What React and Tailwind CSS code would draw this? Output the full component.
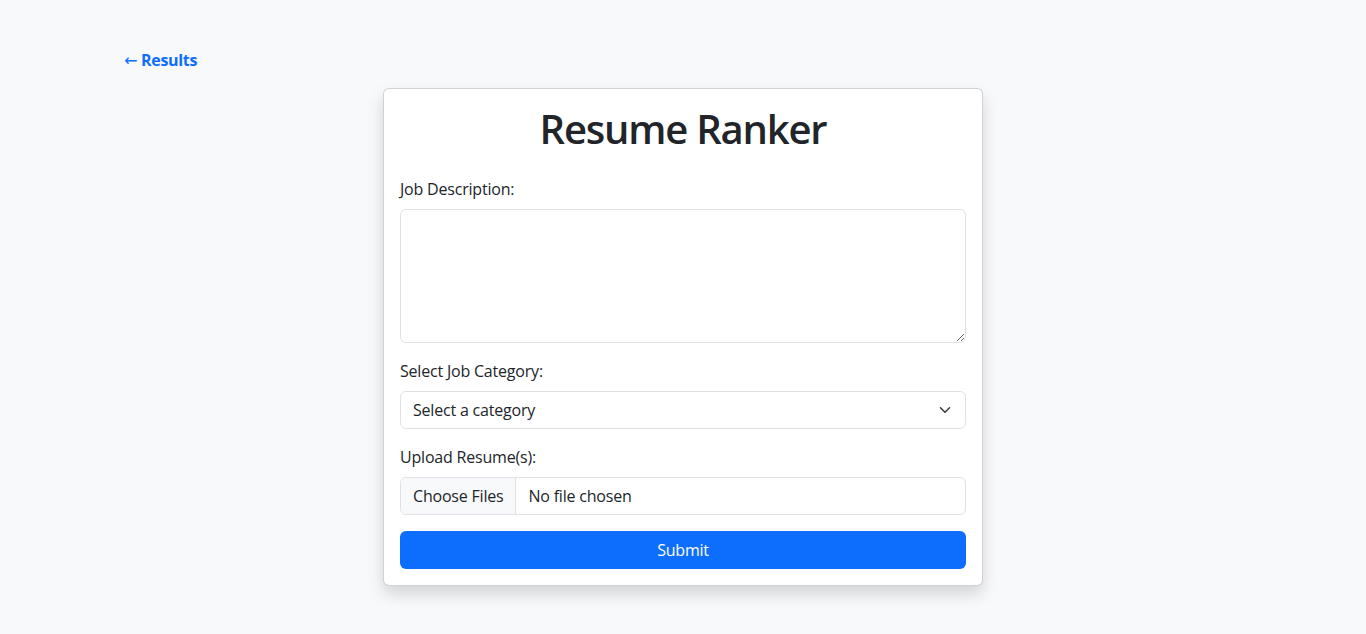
import React from "react";

export default function App() {
  return (
    <div
      className="min-h-[634px] bg-[#f8f9fa] text-[#212529] pt-12 pb-12"
      style={{ fontFamily: '"Open Sans", "Noto Sans", sans-serif' }}
    >
      <div className="pl-[124px] mb-4 h-6 leading-6">
        <a href="#" className="text-[#0d6efd] font-bold text-[16px] no-underline tracking-[-0.3px]">
          <span className="font-normal" style={{ fontFamily: '"DejaVu Sans", sans-serif' }}>←</span> Results
        </a>
      </div>
      <div className="mx-auto w-[600px] bg-white border border-[rgba(0,0,0,0.175)] rounded-[6px] shadow-[0_8px_16px_rgba(0,0,0,0.15)] p-4">
        <h1 className="text-center text-[40px] leading-[48px] font-semibold tracking-[-1.2px] mb-6">Resume Ranker</h1>
        <div className="mb-4">
          <label className="block text-[16px] leading-6 mb-2 tracking-[-0.2px]">Job Description:</label>
          <textarea
            rows={5}
            className="block w-full h-[134px] border border-[#dee2e6] rounded-[6px] px-3 py-1.5 text-[16px] leading-6 bg-white outline-none"
          />
        </div>
        <div className="mb-4">
          <label className="block text-[16px] leading-6 mb-2 tracking-[-0.2px]">Select Job Category:</label>
          <div className="relative h-[38px] border border-[#dee2e6] rounded-[6px] flex items-center pl-3 pr-9 text-[16px] leading-6 bg-white tracking-[-0.2px]">
            <span>Select a category</span>
            <svg
              className="absolute right-3 top-1/2 -translate-y-1/2"
              width="16"
              height="12"
              viewBox="0 0 16 16"
              fill="none"
              stroke="#343a40"
              strokeWidth="2"
              strokeLinecap="round"
              strokeLinejoin="round"
            >
              <path d="m2 5 6 6 6-6" />
            </svg>
          </div>
        </div>
        <div className="mb-4">
          <label className="block text-[16px] leading-6 mb-2 tracking-[-0.2px]">Upload Resume(s):</label>
          <div className="h-[38px] border border-[#dee2e6] rounded-[6px] flex items-stretch text-[16px] leading-6 bg-white overflow-hidden tracking-[-0.2px]">
            <span className="flex items-center px-3 bg-[#f8f9fa] border-r border-[#dee2e6]">Choose Files</span>
            <span className="flex items-center px-3">No file chosen</span>
          </div>
        </div>
        <button className="w-full h-[38px] bg-[#0d6efd] text-white rounded-[6px] text-[16px] leading-6 tracking-[-0.2px]">
          Submit
        </button>
      </div>
    </div>
  );
}
